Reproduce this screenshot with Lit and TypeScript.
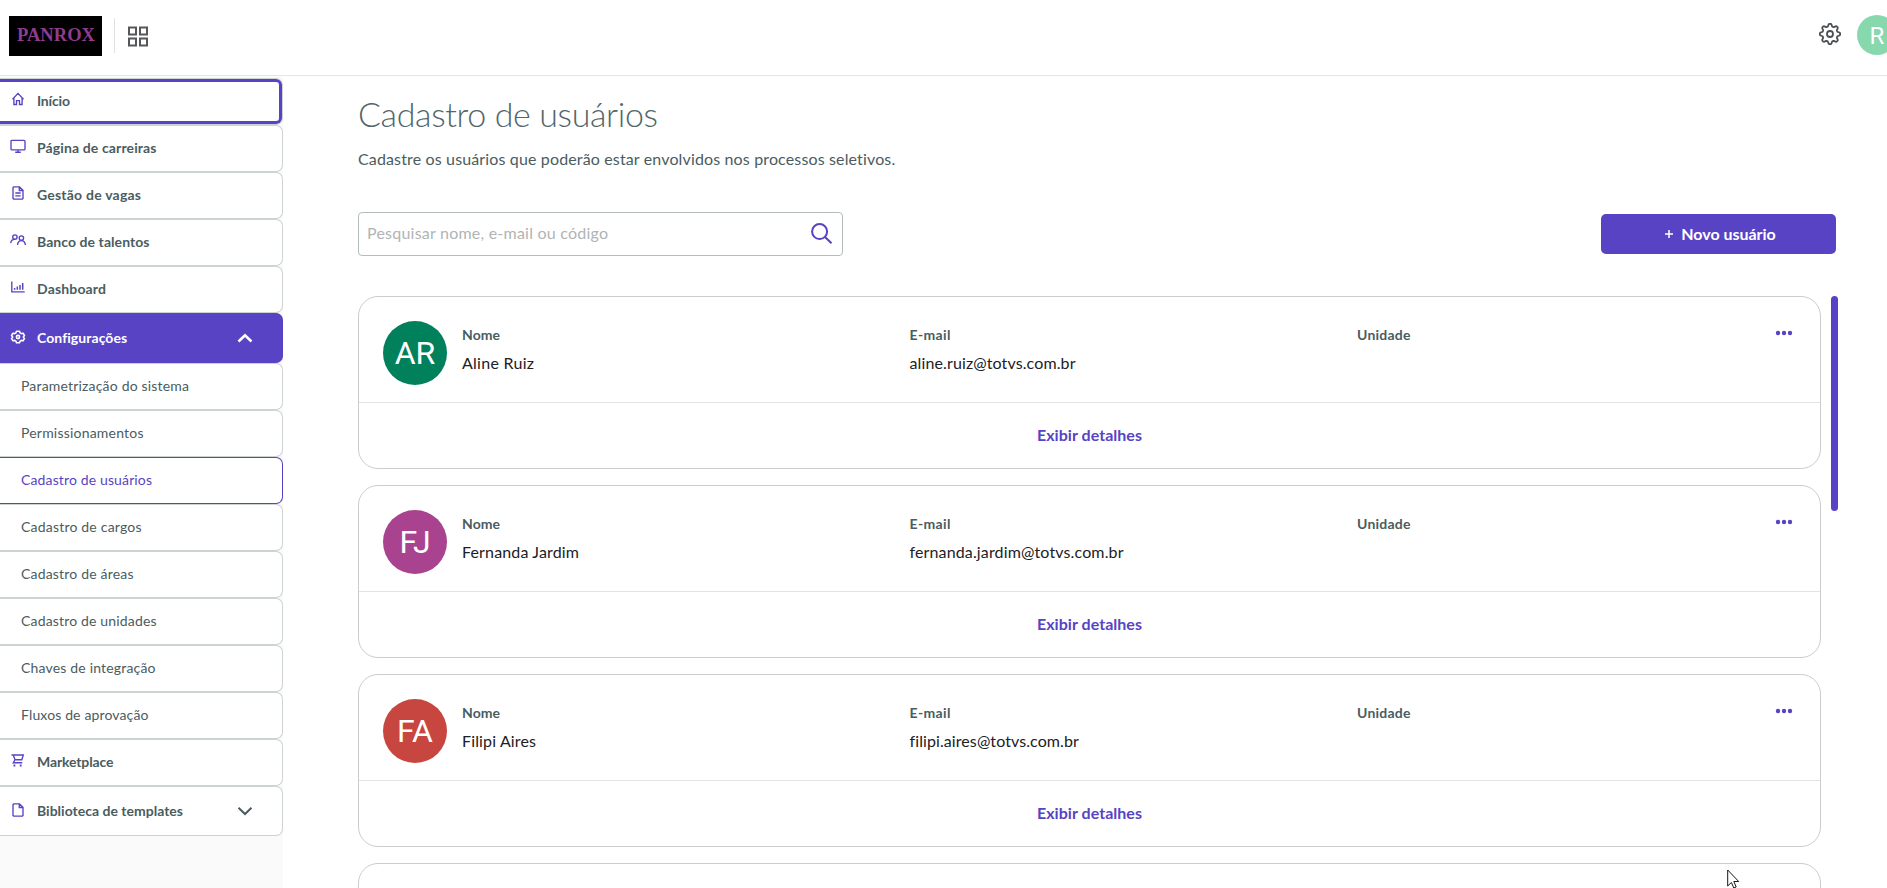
import { LitElement, html, css, svg, nothing } from "lit";
import { customElement, property } from "lit/decorators.js";

/** Text whose tracking is adjusted so that the run has the given width. */
@customElement("fit-text")
class FitText extends LitElement {
  @property({ type: Number }) w = 0;
  @property() text = "";
  static styles = css`
    :host { display: inline-block; white-space: nowrap; }
  `;
  render() {
    return html`<span>${this.text}</span>`;
  }
  updated() {
    const span = this.renderRoot.querySelector("span") as HTMLElement;
    span.style.letterSpacing = "0";
    const natural = span.getBoundingClientRect().width;
    span.style.letterSpacing = `${(this.w - natural) / Math.max(1, this.text.length - 1)}px`;
  }
}

const icons: Record<string, unknown> = {
  home: svg`<path d="M1.500 7.200 7 1.400l5.500 5.800M2.900 6v6.500h2.600V8.600h3v3.900h2.600V6"/>`,
  monitor: svg`<rect x="0" y="1.300" width="14" height="9.600" rx="1"/><path d="M4.200 13.200h5.600M7 11v2"/>`,
  doc: svg`<path d="M2.600 .9h5.900L12 4.300v8.200l-.6.600H2.600L2 12.500v-11zM8.300 1v3.500H12M4.300 7h5.400M4.300 9.800h5.400"/>`,
  people: svg`<circle cx="3.900" cy="4" r="2.200"/><circle cx="10.400" cy="5" r="2.200"/><path d="M-.3 10.200C0 7.600 1.700 6.400 3.600 6.400M6.500 12c.3-3 1.800-4.400 3.900-4.400s3.700 1.400 4 4.400M6.100 4.500"/>`,
  chart: svg`<path d="M.8 1.500v10.300h12.900" /><path d="M3.600 9.800V8M6.300 9.800V6.600M9 9.800V5M11.700 9.800V3" stroke-width="1.500"/>`,
  gear: svg`<path stroke-width="1.600" stroke-linejoin="round" d="M5.500 1.200h3l.6 1.700 1.200.7 1.800-.4 1.400 2.400-1.200 1.400 1.200 1.400-1.400 2.400-1.800-.4-1.200.7-.6 1.700h-3l-.6-1.700-1.200-.7-1.800.4L.5 8.400 1.700 7 .5 5.600l1.400-2.400 1.800.4 1.200-.7z"/><circle cx="7" cy="7" r="1.600" stroke-width="1.600"/>`,
  cart: svg`<path d="M.5 2h11.800l-1.500 4.700H4M2.200 2l1.800 4.800-1.700 2.900h9"/><path d="M2.500 12.500h1.800M8.800 12.500h1.800" stroke-width="1.800"/>`,
  page: svg`<path d="M2.600 .9h5.900L12 4.300v8.200l-.6.600H2.600L2 12.500v-11zM8.300 1v3.500H12"/>`,
};

interface NavItem { label: string; w: number; icon?: string; kind?: string; arrow?: string; }
const nav: NavItem[] = [
  { label: "Início", w: 33, icon: "home", kind: "focus" },
  { label: "Página de carreiras", w: 119.500, icon: "monitor" },
  { label: "Gestão de vagas", w: 104, icon: "doc" },
  { label: "Banco de talentos", w: 112.500, icon: "people" },
  { label: "Dashboard", w: 69, icon: "chart" },
  { label: "Configurações", w: 90, icon: "gear", kind: "open", arrow: "up" },
  { label: "Parametrização do sistema", w: 168 },
  { label: "Permissionamentos", w: 122.500 },
  { label: "Cadastro de usuários", w: 131, kind: "current" },
  { label: "Cadastro de cargos", w: 120.500 },
  { label: "Cadastro de áreas", w: 112.500 },
  { label: "Cadastro de unidades", w: 135.500 },
  { label: "Chaves de integração", w: 134.500 },
  { label: "Fluxos de aprovação", w: 127.500 },
  { label: "Marketplace", w: 76.500, icon: "cart" },
  { label: "Biblioteca de templates", w: 146, icon: "page", arrow: "down" },
];

const users = [
  { initials: "AR", color: "#00805b", name: "Aline Ruiz", nw: 72, email: "aline.ruiz@totvs.com.br", ew: 166 },
  { initials: "FJ", color: "#a9428f", name: "Fernanda Jardim", nw: 117, email: "fernanda.jardim@totvs.com.br", ew: 214 },
  { initials: "FA", color: "#c7463f", name: "Filipi Aires", nw: 74, email: "filipi.aires@totvs.com.br", ew: 169 },
  { initials: "", color: "#5843c4", name: "", nw: 0, email: "", ew: 0 },
];

const gearPath = (() => {
  const pts: string[] = [];
  for (let i = 0; i < 96; i++) {
    const a = (i / 96) * Math.PI * 2;
    const c = Math.cos(a * 8);
    const r = 8.900 + 1.300 * Math.tanh(c * 1.800);
    pts.push(`${(12 + r * Math.sin(a)).toFixed(2)} ${(12 - r * Math.cos(a)).toFixed(2)}`);
  }
  return `M${pts.join("L")}Z`;
})();

@customElement("app-root")
class AppRoot extends LitElement {
  static styles = css`
    :host { display: flex; flex-direction: column; height: 100vh; overflow: hidden; position: relative; background: #fff; color: #4a5c60; font: 16px/20px Lato, "Noto Sans", sans-serif; }
    * { box-sizing: border-box; }
    svg { fill: none; stroke: currentColor; overflow: visible; display: block; flex: none; }
    header { display: flex; align-items: flex-start; height: 76px; flex: none; border-bottom: 1px solid #e4e5e6; padding: 15px 0 0 9px; }
    .logo { width: 93px; height: 40px; margin-top: 1px; background: #000; color: #8f3c8e; display: flex; align-items: center; justify-content: center; font: 700 18.500px/36px "Liberation Serif", serif; padding: 0 0 3px 1px; }
    .sep { width: 1px; height: 35px; background: #e0e2e2; margin: 3px 13px 0 12px; }
    .grid { color: #55585b; margin-top: 11px; }
    .space { flex: 1; }
    .cog { color: #4d5053; margin: 7px 15px 0 0; }
    .me { width: 40px; height: 40px; border-radius: 50%; background: #88d8ae; color: #fff; font: 24px/42px Roboto, sans-serif; text-align: center; margin-right: -10px; flex: none; }
    .body { flex: 1; display: flex; min-height: 0; }
    nav { width: 283px; flex: none; background: #fafafa; padding-top: 2px; }
    .item { height: 47px; display: flex; align-items: center; background: #fff; border: 1px solid #cdd2d2; border-left: 0; border-radius: 0 7px 7px 0; padding: 0 30px 2px 11px; font-size: 14px; font-weight: 700; }
    .item svg { stroke-width: 1.350; color: #5843c4; margin: -3px 12px 0 0; }
    .item .arrow { color: #4a5c60; margin: 0 0 0 auto; stroke-width: 2; }
    .item.tall { height: 50px; padding-bottom: 0; }
    .sub { padding-left: 21px; font-weight: 400; }
    .focus { box-shadow: inset 0 3px #5843c4, inset -3px 0 #5843c4, inset 0 -3px #5843c4; }
    .open, .open svg, .open .arrow { background: #5843c4; color: #fff; border-color: #5843c4; }
    .item.open .arrow { color: #fff; stroke-width: 2.600; }
    .item.open svg { color: #fff; }
    .current { border-color: #5843c4; color: #5843c4; }
    main { flex: 1; min-width: 0; padding: 16px 49px 0 75px; overflow: hidden; display: flex; flex-direction: column; }
    h1 { font: 300 34px/44px Lato, sans-serif; margin: 0; color: #53656a; }
    .lead { margin: 10px 0 0; height: 25px; line-height: 26px; }
    .tools { display: flex; justify-content: space-between; align-items: center; margin: 41px 2px 0 0; height: 44px; }
    .search { width: 485px; height: 44px; border: 1px solid #b3bbbb; border-radius: 4px; padding: 0 10px 2px 8px; display: flex; align-items: center; justify-content: space-between; color: #b0b4b4; }
    .search svg { color: #5843c4; stroke-width: 2; margin-top: 1px; }
    .btn { width: 235px; height: 40px; border: 0; border-radius: 5px; background: #5843c4; color: #fff; display: flex; align-items: center; justify-content: center; gap: 8px; padding: 0 0 1px 4px; font: 700 16px/20px Lato, sans-serif; }
    .list { display: flex; justify-content: space-between; margin-top: 40px; }
    .cards { width: 1463px; display: flex; flex-direction: column; gap: 16px; }
    .thumb { width: 7px; height: 215px; background: #5843c4; border-radius: 4px; }
    .card { height: 173px; flex: none; border: 1px solid #cbcccc; border-radius: 20px; }
    .top { height: 106px; border-bottom: 1px solid #e2e3e3; display: flex; padding: 24px 27px 0 24px; }
    .avatar { width: 64px; height: 64px; border-radius: 50%; color: #fff; font: 32px/65px Roboto, sans-serif; text-align: center; margin-right: 15px; flex: none; }
    .field { width: 447.500px; flex: none; padding-top: 4px; color: #1d2024; }
    .field.last { width: auto; }
    .field b { display: block; font-size: 14px; line-height: 20px; height: 28px; color: #4a5c60; }
    .dots { margin: 9px 0 0 auto; fill: #5843c4; stroke: none; }
    .more { height: 65px; padding-bottom: 2px; display: flex; align-items: center; justify-content: center; color: #5843c4; font-weight: 700; }
    .cursor { position: absolute; left: 1727px; top: 869px; fill: #fff; stroke: #15171c; }
  `;

  private item(n: NavItem) {
    return html`<div class="item ${n.icon ? "" : "sub"} ${n.arrow ? "tall" : ""} ${n.kind ?? ""}">
      ${n.icon ? html`<svg width="14" height="14" viewBox="0 0 14 14">${icons[n.icon]}</svg>` : nothing}
      <fit-text .w=${n.w} .text=${n.label}></fit-text>
      ${n.arrow
        ? html`<svg class="arrow" width="14" height="8" viewBox="0 0 14 8"><path d=${n.arrow === "up" ? "M.5 7.500 7 1.200l6.500 6.300" : "M.5 .8 7 7l6.500-6.200"} /></svg>`
        : nothing}
    </div>`;
  }

  private card(u: (typeof users)[number]) {
    if (!u.name) return html`<div class="card"></div>`;
    return html`<div class="card">
      <div class="top">
        <div class="avatar" style="background:${u.color}">${u.initials}</div>
        <div class="field"><b><fit-text .w=${38} .text=${"Nome"}></fit-text></b><fit-text .w=${u.nw} .text=${u.name}></fit-text></div>
        <div class="field"><b><fit-text .w=${41} .text=${"E-mail"}></fit-text></b><fit-text .w=${u.ew} .text=${u.email}></fit-text></div>
        <div class="field last"><b><fit-text .w=${53.500} .text=${"Unidade"}></fit-text></b></div>
        <svg class="dots" width="18" height="6" viewBox="0 0 18 6"><circle cx="3" cy="3" r="2.200"/><circle cx="9" cy="3" r="2.200"/><circle cx="15" cy="3" r="2.200"/></svg>
      </div>
      <div class="more"><fit-text .w=${105} .text=${"Exibir detalhes"}></fit-text></div>
    </div>`;
  }

  render() {
    return html`
      <header>
        <div class="logo"><fit-text .w=${78} .text=${"PANROX"}></fit-text></div>
        <div class="sep"></div>
        <svg class="grid" width="21" height="21" viewBox="0 0 21 21" stroke-width="2"><path d="M1 1.500h7v7H1zM12 1.500h7v7h-7zM1 12.500h7v7H1zM12 12.500h7v7h-7z"/></svg>
        <div class="space"></div>
        <svg class="cog" width="24" height="24" viewBox="0 0 24 24" stroke-width="1.800"><path d=${gearPath} /><circle cx="12" cy="12" r="3"/></svg>
        <div class="me">R</div>
      </header>
      <div class="body">
        <nav>${nav.map((n) => this.item(n))}</nav>
        <main>
          <h1><fit-text .w=${300} .text=${"Cadastro de usuários"}></fit-text></h1>
          <p class="lead"><fit-text .w=${537.500} .text=${"Cadastre os usuários que poderão estar envolvidos nos processos seletivos."}></fit-text></p>
          <div class="tools">
            <div class="search">
              <fit-text .w=${241} .text=${"Pesquisar nome, e-mail ou código"}></fit-text>
              <svg width="21" height="21" viewBox="0 0 21 21"><circle cx="8.600" cy="8.600" r="7.500"/><path d="m14 14 6.500 6.300"/></svg>
            </div>
            <button class="btn"><svg width="8" height="10" viewBox="0 0 8 10" stroke-width="1.500"><path d="M4 1v8M0 5h8"/></svg><fit-text .w=${94.500} .text=${"Novo usuário"}></fit-text></button>
          </div>
          <div class="list">
            <div class="cards">${users.map((u) => this.card(u))}</div>
            <div class="thumb"></div>
          </div>
        </main>
      </div>
      <svg class="cursor" width="13" height="20" viewBox="0 0 13 20"><path d="M.7 1v16l3.700-3.500 2.400 5.500 2.400-1-2.400-5.500h4.900z"/></svg>
    `;
  }
}
